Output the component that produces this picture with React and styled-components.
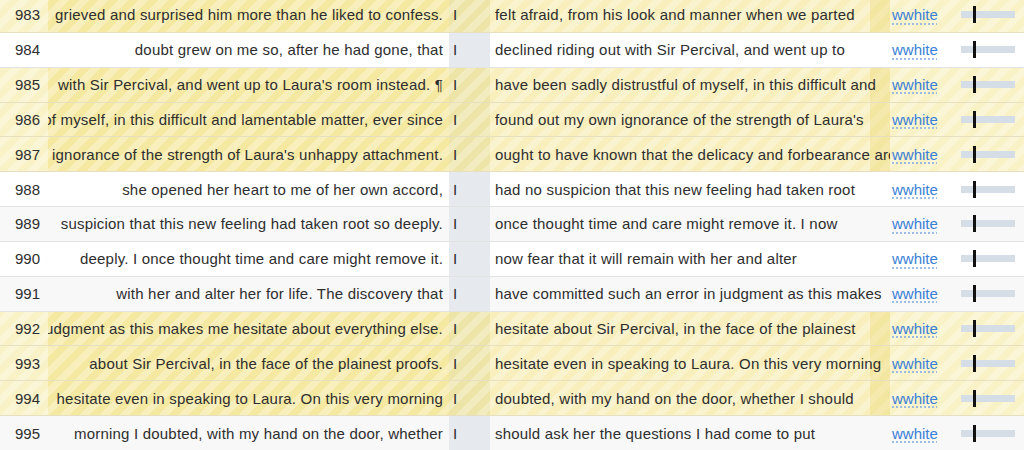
import React from "react";
import styled, { createGlobalStyle, css } from "styled-components";

const rows = [
  [983, "grieved and surprised him more than he liked to confess.", "felt afraid, from his look and manner when we parted", true],
  [984, "doubt grew on me so, after he had gone, that", "declined riding out with Sir Percival, and went up to", false],
  [985, "with Sir Percival, and went up to Laura's room instead. ¶", "have been sadly distrustful of myself, in this difficult and", true],
  [986, "of myself, in this difficult and lamentable matter, ever since", "found out my own ignorance of the strength of Laura's", true],
  [987, "ignorance of the strength of Laura's unhappy attachment.", "ought to have known that the delicacy and forbearance are", true],
  [988, "she opened her heart to me of her own accord,", "had no suspicion that this new feeling had taken root", false],
  [989, "suspicion that this new feeling had taken root so deeply.", "once thought time and care might remove it. I now", false],
  [990, "deeply. I once thought time and care might remove it.", "now fear that it will remain with her and alter", false],
  [991, "with her and alter her for life. The discovery that", "have committed such an error in judgment as this makes", false],
  [992, "judgment as this makes me hesitate about everything else.", "hesitate about Sir Percival, in the face of the plainest", true],
  [993, "about Sir Percival, in the face of the plainest proofs.", "hesitate even in speaking to Laura. On this very morning", true],
  [994, "hesitate even in speaking to Laura. On this very morning", "doubted, with my hand on the door, whether I should", true],
  [995, "morning I doubted, with my hand on the door, whether", "should ask her the questions I had come to put", false],
];

const GlobalStyle = createGlobalStyle`
  html, body {
    margin: 0;
    padding: 0;
    background: #fff;
    overflow: hidden;
  }
  body {
    font-family: "Liberation Sans", Arial, sans-serif;
    font-size: 15px;
    color: #2e2e2e;
  }
`;

const stripes = css`
  background-image: repeating-linear-gradient(
    135deg,
    rgba(255, 255, 255, 0.28) 0px,
    rgba(255, 255, 255, 0.28) 7px,
    rgba(255, 255, 255, 0) 7px,
    rgba(255, 255, 255, 0) 14px
  );
  background-attachment: fixed;
`;

// the list is scrolled a couple of pixels down
const Table = styled.div`
  display: flex;
  flex-direction: column;
  margin-top: -2px;
`;

const Row = styled.div`
  display: grid;
  grid-template-columns: 48px 401px 41px 400px 70px 64px;
  height: 34.85px;
  box-sizing: border-box;
  border-bottom: 1px solid ${(p) => (p.$hl ? "#e6dfc0" : "#e3e3e3")};
  background: ${(p) => (p.$hl ? "#f8f0c0" : p.$odd ? "#f8f8f8" : "#fff")};
`;

const Cell = styled.div`
  display: flex;
  align-items: center;
  overflow: hidden;
  white-space: nowrap;
  min-width: 0;
  ${(p) => p.$hl && stripes}
`;

const NumCell = styled(Cell)`
  justify-content: flex-end;
  padding-right: 8px;
  background-color: ${(p) => (p.$hl ? "#f9f2c6" : "transparent")};
`;

const LeftCell = styled(Cell)`
  justify-content: flex-end;
  padding-right: 6px;
  letter-spacing: 0.2px;
  background-color: ${(p) => (p.$hl ? "#f5e9a2" : "transparent")};
`;

const MidCell = styled(Cell)`
  padding-left: 4px;
  background-color: ${(p) => (p.$hl ? "#ede4a7" : "#e6eaef")};
`;

const RightCell = styled(Cell)`
  padding-left: 5px;
  letter-spacing: 0.2px;
  background-color: ${(p) => (p.$hl ? "#f8efbc" : "transparent")};
  ${(p) =>
    p.$hl &&
    css`
      box-shadow: inset -20px 0 0 rgba(236, 214, 110, 0.35);
    `}
`;

const UserCell = styled(Cell)`
  padding-left: 2px;
  background-color: ${(p) => (p.$hl ? "#f9f2c6" : "transparent")};
`;

const UserLink = styled.a`
  color: #3a7fd6;
  text-decoration: underline dotted #7fa9e3;
  text-underline-offset: 3px;
  cursor: pointer;
`;

const SliderCell = styled(Cell)`
  padding-left: 1px;
  background-color: ${(p) => (p.$hl ? "#f9f2c6" : "transparent")};
`;

const Track = styled.div`
  position: relative;
  width: 54px;
  height: 7px;
  background: #d5dee7;
`;

const Thumb = styled.div`
  position: absolute;
  left: 12px;
  top: -5px;
  width: 2.5px;
  height: 17px;
  background: #111;
`;

export default function App() {
  return (
    <>
      <GlobalStyle />
      <Table>
        {rows.map(([n, left, right, hl]) => (
          <Row key={n} $hl={hl} $odd={n % 2 === 1}>
            <NumCell $hl={hl}>{n}</NumCell>
            <LeftCell $hl={hl}>
              <span>{left}</span>
            </LeftCell>
            <MidCell $hl={hl}>I</MidCell>
            <RightCell $hl={hl}>{right}</RightCell>
            <UserCell $hl={hl}>
              <UserLink>wwhite</UserLink>
            </UserCell>
            <SliderCell $hl={hl}>
              <Track>
                <Thumb />
              </Track>
            </SliderCell>
          </Row>
        ))}
      </Table>
    </>
  );
}
